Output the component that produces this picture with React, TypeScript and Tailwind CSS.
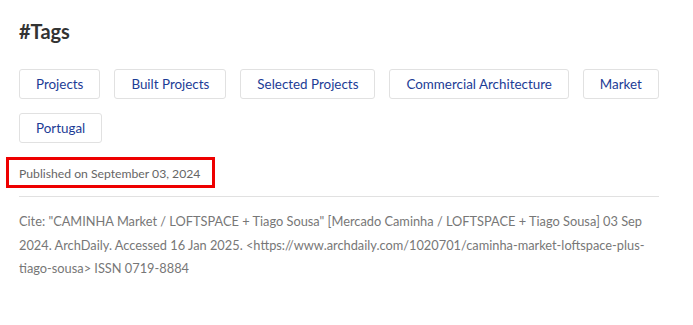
import React from "react";

const tags = [
  "Projects",
  "Built Projects",
  "Selected Projects",
  "Commercial Architecture",
  "Market",
  "Portugal",
];

export default function App() {
  return (
    <div
      className="w-[693px] h-[325px] bg-white"
      style={{ fontFamily: "Lato, 'Liberation Sans', sans-serif" }}
    >
      <div className="w-[640px] ml-[19px] pt-[19px]">
        <h2 className="text-[20px] leading-[24px] font-bold text-[#333333]">#Tags</h2>
        <div className="mt-[26px] flex flex-wrap gap-x-[14px] gap-y-[14px]">
          {tags.map((t) => (
            <a
              key={t}
              className="h-[30px] flex items-center px-[16px] border border-[#e1e1e1] rounded-[3px] text-[13.4px] text-[#1c3c96]"
            >
              {t}
            </a>
          ))}
        </div>
        <div className="relative mt-[21px]">
          <div className="absolute left-[-13px] top-[-7px] w-[209px] h-[31px] border-[3px] border-[#ee0000]" />
          <p className="text-[12.2px] leading-[20px] text-[#666666]">Published on September 03, 2024</p>
        </div>
        <hr className="mt-[12px] border-0 border-t border-[#e1e1e1]" />
        <p className="mt-[13px] text-[12.8px] leading-[23.5px] text-[#777777]">
          Cite: "CAMINHA Market / LOFTSPACE + Tiago Sousa" [Mercado Caminha / LOFTSPACE + Tiago Sousa] 03 Sep 2024. ArchDaily. Accessed 16 Jan 2025. &lt;https://www.archdaily.com/1020701/caminha-market-loftspace-plus-tiago-sousa&gt; ISSN 0719-8884
        </p>
      </div>
    </div>
  );
}
